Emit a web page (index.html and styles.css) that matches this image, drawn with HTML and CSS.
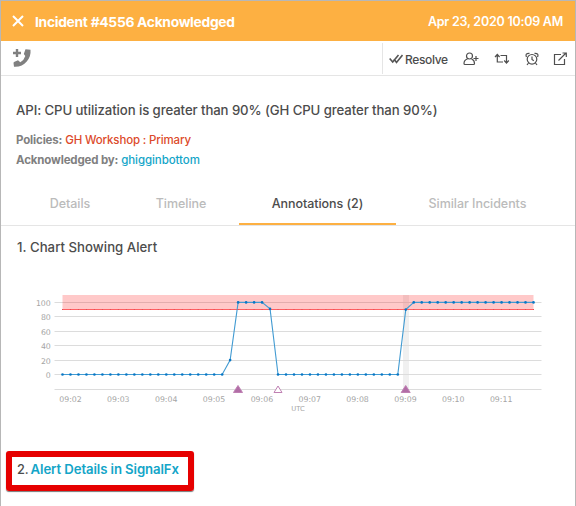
FILE: index.html
```html
<!DOCTYPE html>
<html lang="en">
<head>
<meta charset="utf-8">
<title>Incident #4556</title>
<link rel="stylesheet" href="styles.css">
</head>
<body>
<main class="panel">
  <header class="banner">
    <svg class="close" width="12" height="12" viewBox="0 0 12 12"><path d="M1 1l10 10M11 1L1 11"/></svg>
    <h1 class="banner-title">Incident #4556 Acknowledged</h1>
    <time class="banner-time">Apr 23, 2020 10:09 AM</time>
  </header>
  <div class="toolbar">
    <svg class="phone" width="20" height="20" viewBox="0 0 20 20"><path class="plus" d="M5 1v8M1 5h8"/><path d="M13.500 1.300l5 .4C19.500 11 12 19.500 2 18.700L1.500 15q0-1 1-1.300L6 12.300l2.300 2q3.700-2 5-6.300l-1.500-2z"/></svg>
    <div class="actions">
      <svg class="check" width="14" height="10" viewBox="0 0 14 10"><path d="M.7 4.500l3 3.500L9.500 1M5 5l2.500 3.500L13.500 1"/></svg>
      <span class="resolve">Resolve</span>
      <svg class="icon user" width="17" height="14" viewBox="0 0 17 14"><circle cx="6.500" cy="4" r="3"/><path d="M4.500 7Q1 8 1 11.500q0 1 1 1h8.500q1 0 1-1Q11.500 8 8.500 7M13 4v5M10.500 6.500h5"/></svg>
      <svg class="icon repeat" width="16" height="12" viewBox="0 0 16 12"><path d="M1 4l2.300-2.500L5.600 4M3.300 2v7H9M6.500 2.500h6v7M10.200 7.500l2.300 2.500 2.300-2.500"/></svg>
      <svg class="icon alarm" width="14" height="14" viewBox="0 0 14 14"><circle cx="7" cy="7.300" r="4.800"/><path d="M7 4.500v3l1.800 1.300M1.500 5Q-.2 1 4.500 1.300M12.500 5Q14.200 1 9.500 1.300M3.500 11L2 13M10.500 11l1.500 2"/></svg>
      <svg class="icon open" width="15" height="14" viewBox="0 0 15 14"><path d="M8 2.500H1.500v10h10V7M5.500 8.500L13 1M9.500 1H13.300v4"/></svg>
    </div>
  </div>
  <section class="summary">
    <h2 class="subject">API: CPU utilization is greater than 90% (GH CPU greater than 90%)</h2>
    <p class="meta policies"><b>Policies:</b> <a class="policy">GH Workshop : Primary</a></p>
    <p class="meta acked"><b>Acknowledged by:</b> <a class="user-link">ghigginbottom</a></p>
  </section>
  <nav class="tabs">
    <a class="tab details">Details</a>
    <a class="tab timeline">Timeline</a>
    <a class="tab active">Annotations (2)</a>
    <a class="tab similar">Similar Incidents</a>
  </nav>
  <section class="notes">
    <h3 class="note-title">1. Chart Showing Alert</h3>
    <svg class="chart" id="chart" width="515" height="135" viewBox="30 285 515 135"></svg>
    <div class="callout">2. <a class="detail-link">Alert Details in SignalFx</a></div>
  </section>
</main>
<script src="chart.js"></script>
</body>
</html>
```
FILE: chart.js
```js
const chart = document.getElementById('chart');
function add(name, attrs, text) {
  const el = document.createElementNS('http://www.w3.org/2000/svg', name);
  for (const key in attrs) el.setAttribute(key, attrs[key]);
  if (text !== undefined) el.textContent = text;
  chart.appendChild(el);
}
const y = v => 374.5 - v * 0.721;
const x = i => 62.5 + i * 7.983;

add('rect', { x: 403, y: 295, width: 6, height: 94, class: 'event' });
[0, 20, 40, 60, 80, 100].forEach(v => {
  const gy = Math.floor(y(v)) + 0.5;
  add('path', { d: `M54.500 ${gy}H541.500`, class: 'grid' });
  add('text', { x: 50.800, y: gy + 3, class: 'ylabel' }, v);
});
add('path', { d: 'M54.500 389.500H541.500', class: 'grid' });
add('rect', { x: 62.500, y: 295, width: 471, height: 14, class: 'band' });
add('rect', { x: 62, y: 309, width: 472, height: 1, class: 'threshold' });

const values = Array.from({ length: 60 }, (_, i) => {
  if (i === 21) return 20;
  if (i >= 22 && i <= 25) return 100;
  if (i === 26) return 91;
  if (i === 43) return 90;
  return i > 43 ? 100 : 0;
});
add('polyline', { points: values.map((v, i) => `${x(i)},${y(v)}`).join(' '), class: 'series' });
values.forEach((v, i) => {
  add('rect', { x: x(i) - 0.5, y: 309, width: 1, height: 1, class: 'threshold-point' });
  add('circle', { cx: x(i), cy: y(v), r: 1.3, class: 'point' });
});
for (let m = 2; m <= 11; m++) {
  add('text', { x: 70.500 + (m - 2) * 47.85, y: 402, class: 'xlabel' }, '09:' + String(m).padStart(2, '0'));
}
add('text', { x: 298, y: 411, class: 'unit' }, 'UTC');
add('path', { d: 'M238 385.500l4.500 7h-9z', class: 'marker filled' });
add('path', { d: 'M278 386l4 6.500h-8z', class: 'marker' });
add('path', { d: 'M405.700 385.500l4.500 7h-9z', class: 'marker filled' });
```
FILE: styles.css
```css
* { box-sizing: border-box; }
body { margin: 0; background: #fff; color: #4c4c4c; font-family: Inter, "Liberation Sans", sans-serif; }
h1, h2, h3, p { margin: 0; font-weight: 500; }
.panel { width: 576px; height: 506px; overflow: hidden; border: solid #b7b7b7; border-width: 1px 1px 0; }
.banner { display: flex; align-items: center; height: 40px; padding: 0 12px 0 11px; background: #fdb042; color: #fff; }
.close { fill: none; stroke: #fff; stroke-width: 2; }
.banner-title { margin-left: 11px; padding-top: 1px; font-size: 13.800px; font-weight: 700; letter-spacing: -.28px; line-height: 18px; }
.banner-time { margin-left: auto; font-size: 12.500px; font-weight: 600; letter-spacing: -.24px; }
.toolbar { display: flex; align-items: center; height: 35px; padding-left: 11px; border-bottom: 1px solid #e5e5e5; }
.phone { fill: #808080; }
.phone .plus { stroke: #808080; stroke-width: 2.400; }
.actions { display: flex; align-items: center; width: 193px; height: 31px; margin-left: auto; padding: 2px 7px 0 6px; border-left: 1px solid #e5e5e5; }
.check { flex: none; fill: none; stroke: #555; stroke-width: 1.600; }
.resolve { flex: none; width: 43px; margin-left: 2px; font-size: 12px; font-weight: 500; letter-spacing: -.36px; }
.icon { flex: none; fill: none; stroke: #4f4f4f; stroke-width: 1.200; }
.user { margin-left: 15px; }
.repeat { margin-left: 14px; }
.alarm { margin-left: 15px; }
.open { margin-left: 14px; }
.summary { height: 107px; padding: 24px 15px 0; }
.subject { height: 20px; font-size: 13.200px; line-height: 20px; letter-spacing: -.09px; white-space: nowrap; }
.meta { height: 20px; font-size: 11.500px; line-height: 20px; letter-spacing: -.15px; white-space: nowrap; }
.policies { margin-top: 10px; }
.meta b { color: #808080; font-weight: 700; }
.policy { color: #dc4a2b; }
.user-link, .detail-link { color: #13a5c8; }
.user-link { letter-spacing: -.08px; }
.tabs { display: grid; grid-template-columns: 112px 112px 157px 163px; height: 43px; padding-left: 14px; border-bottom: 1px solid #e5e5e5; }
.tab { display: flex; justify-content: center; height: 43px; padding-top: 12px; font-size: 12.500px; font-weight: 500; line-height: 18px; letter-spacing: -.05px; color: #bbb; white-space: nowrap; }
.details { padding-right: 2px; }
.timeline { padding-right: 4px; }
.active { height: 42px; border-bottom: 2px solid #fdb042; color: #4c4c4c; }
.notes { display: flex; flex-direction: column; align-items: flex-start; }
.note-title { height: 20px; margin: 11px 0 0 16px; font-size: 13.200px; line-height: 20px; letter-spacing: .03px; }
.chart { margin: 28px 0 0 29px; font-family: "DejaVu Sans", sans-serif; }
.grid { stroke: #dcdcdc; stroke-width: 1; }
.event { fill: #f0f0f0; }
.band { fill: #ff0000; fill-opacity: .21; }
.threshold { fill: #ff5f62; }
.threshold-point { fill: #e05056; }
.series { fill: none; stroke: #429bd2; stroke-width: 1.100; }
.point { fill: #0877c5; }
.ylabel { fill: #a5a5a5; font-size: 7.800px; text-anchor: end; }
.xlabel { fill: #a5a5a5; font-size: 7.800px; text-anchor: middle; }
.unit { fill: #a5a5a5; font-size: 6.800px; text-anchor: middle; }
.marker { fill: #fff; stroke: #bf80b3; stroke-width: 1; }
.marker.filled { fill: #b16da6; }
.callout { display: flex; align-items: baseline; gap: 2px; width: 188px; height: 40px; margin: 31px 0 0 5px; padding: 4px 0 0 5px; border: 6px solid #e60000; border-radius: 3px; box-shadow: 0 1px 1px #777; font-size: 12.800px; font-weight: 500; line-height: 16px; letter-spacing: -.1px; white-space: nowrap; }
.detail-link { font-size: 13.200px; font-weight: 600; letter-spacing: -.1px; }
```
